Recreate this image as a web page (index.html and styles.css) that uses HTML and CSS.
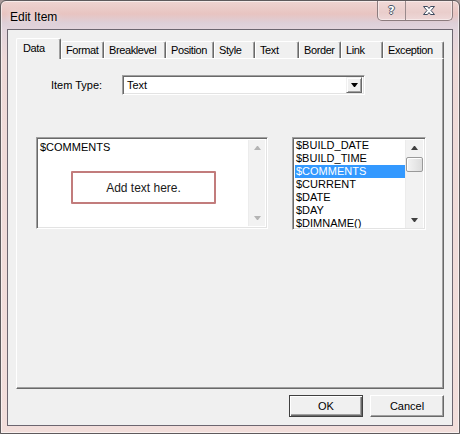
FILE: index.html
```html
<!DOCTYPE html>
<html lang="en">
  <head>
    <meta charset="UTF-8" />
    <title>Edit Item</title>
    <link rel="stylesheet" href="styles.css">
  </head>
  <body>
    <div class="window">
      <div class="titlebar">
        <span class="title">Edit Item</span>
        <div class="caption-buttons">
          <span class="caption-btn help">?</span>
          <span class="caption-btn close">
            <svg width="14" height="11" viewBox="0 0 14 11">
              <path d="M1.5 1.5h4l1.5 2 1.5-2h4l-3.5 4 3.5 4h-4l-1.5-2-1.5 2h-4l3.5-4z" fill="#fff" stroke="#3d4a5e" stroke-width="1" stroke-linejoin="round" />
            </svg>
          </span>
        </div>
      </div>

      <div class="client">
        <div class="tabs">
          <div class="tab active">Data</div>
          <div class="tab">Format</div>
          <div class="tab">Breaklevel</div>
          <div class="tab">Position</div>
          <div class="tab">Style</div>
          <div class="tab">Text</div>
          <div class="tab">Border</div>
          <div class="tab">Link</div>
          <div class="tab">Exception</div>
        </div>

        <div class="panel">
          <div class="field-row">
            <span class="field-label">Item Type:</span>
            <div class="combo">
              <span class="combo-value">Text</span>
              <span class="combo-button"><span class="arrow-down"></span></span>
            </div>
          </div>

          <div class="editors">
            <div class="text-editor sunken">
              <div class="text-editor-body">
                <div class="editor-line">$COMMENTS</div>
                <div class="placeholder-box">Add text here.</div>
              </div>
              <div class="scrollbar disabled">
                <span class="scroll-cell"><span class="arrow-up"></span></span>
                <span class="scroll-track"></span>
                <span class="scroll-cell"><span class="arrow-down small"></span></span>
              </div>
            </div>

            <div class="listbox sunken">
              <ul class="list-items">
                <li>$BUILD_DATE</li>
                <li>$BUILD_TIME</li>
                <li class="selected">$COMMENTS</li>
                <li>$CURRENT</li>
                <li>$DATE</li>
                <li>$DAY</li>
                <li>$DIMNAME()</li>
              </ul>
              <div class="scrollbar">
                <span class="scroll-cell"><span class="arrow-up"></span></span>
                <span class="scroll-track"><span class="scroll-thumb"></span></span>
                <span class="scroll-cell"><span class="arrow-down small"></span></span>
              </div>
            </div>
          </div>
        </div>

        <div class="dialog-buttons">
          <button class="btn default">OK</button>
          <button class="btn">Cancel</button>
        </div>
      </div>
    </div>
  </body>
</html>
```

FILE: styles.css
```css
body {
  margin: 0;
  padding: 0;
  background-color: #a89a9a;
  font-family: "Liberation Sans", Arial, sans-serif;
  font-size: 11px;
  color: #000;
}
.window {
  box-sizing: border-box;
  width: 460px;
  height: 434px;
  display: flex;
  flex-direction: column;
  padding: 0 6px 7px 6px;
  border: 1px solid #5e5a5c;
  border-radius: 6px 6px 0 0;
  box-shadow: inset 0 0 0 1px rgba(255, 255, 255, 0.55);
  background: linear-gradient(
    to bottom,
    #eed4d1 0,
    #e8c4c1 13px,
    #ddcfd8 22px,
    #e2d4dc 28px,
    #eed9d7 60px,
    #f2dedb 100%
  );
}
.titlebar {
  height: 28px;
  display: flex;
  align-items: flex-start;
}
.title {
  padding: 9px 0 0 3px;
  font-size: 12px;
  color: #000;
  text-shadow: 0 0 6px rgba(255, 255, 255, 0.9);
}
.caption-buttons {
  margin-left: auto;
  display: flex;
  height: 19px;
  border: 1px solid #8c7c7e;
  border-top: none;
  border-radius: 0 0 5px 5px;
  background: linear-gradient(to bottom, #f1d9d7, #e9cdcb 60%, #eed8d8);
  box-shadow: inset 0 0 0 1px rgba(255, 255, 255, 0.45);
}
.caption-btn {
  display: flex;
  align-items: center;
  justify-content: center;
}
.help {
  width: 27px;
  border-right: 1px solid #9a8a8c;
  font-family: "DejaVu Sans", sans-serif;
  font-weight: bold;
  font-size: 11px;
  color: #fff;
  text-shadow: 1px 0 #4a5668, -1px 0 #4a5668, 0 1px #4a5668, 0 -1px #4a5668;
}
.close {
  width: 46px;
}
.client {
  flex: 1;
  display: flex;
  flex-direction: column;
  padding: 8px;
  border: 1px solid #6c6670;
  background-color: #f0f0f0;
}
.tabs {
  height: 20px;
  display: grid;
  grid-template-columns: 45px 43px 62px 48px 41px 44px 42px 42px 61px;
  align-items: end;
}
.tab {
  box-sizing: border-box;
  height: 17px;
  padding: 2px 0 0 4px;
  line-height: 13px;
  letter-spacing: -0.4px;
  border-top: 1px solid #fff;
  border-left: 1px solid #fff;
  border-right: 1px solid #696969;
  border-radius: 2px 2px 0 0;
  box-shadow: inset -1px 0 #a0a0a0;
  background-color: #f0f0f0;
  white-space: nowrap;
  overflow: hidden;
}
.tab.active {
  position: relative;
  z-index: 1;
  height: 21px;
  margin-bottom: -1px;
  padding: 3px 0 0 6px;
}
.panel {
  box-sizing: border-box;
  height: 331px;
  border-top: 1px solid #fff;
  border-left: 1px solid #fff;
  border-right: 1px solid #696969;
  border-bottom: 1px solid #696969;
  box-shadow: inset -1px -1px #a0a0a0;
}
.field-row {
  display: flex;
  align-items: center;
  margin-top: 16px;
  padding-left: 34px;
}
.field-label {
  width: 71px;
}
.sunken {
  box-sizing: border-box;
  border-top: 1px solid #a0a0a0;
  border-left: 1px solid #a0a0a0;
  border-right: 1px solid #fff;
  border-bottom: 1px solid #fff;
  box-shadow: inset 1px 1px #696969, inset -1px -1px #e3e3e3;
  background-color: #fff;
}
.combo {
  box-sizing: border-box;
  width: 243px;
  height: 20px;
  display: flex;
  align-items: center;
  padding: 2px;
  border-top: 1px solid #a0a0a0;
  border-left: 1px solid #a0a0a0;
  border-right: 1px solid #fff;
  border-bottom: 1px solid #fff;
  box-shadow: inset 1px 1px #696969, inset -1px -1px #e3e3e3;
  background-color: #fff;
}
.combo-value {
  flex: 1;
  padding-left: 2px;
}
.combo-button {
  box-sizing: border-box;
  width: 16px;
  height: 16px;
  display: flex;
  align-items: center;
  justify-content: center;
  border-top: 1px solid #f0f0f0;
  border-left: 1px solid #f0f0f0;
  border-right: 1px solid #696969;
  border-bottom: 1px solid #696969;
  box-shadow: inset 1px 1px #fff, inset -1px -1px #a0a0a0;
  background-color: #f0f0f0;
}
.arrow-down {
  width: 1px;
  height: 0;
  border-left: 3px solid transparent;
  border-right: 3px solid transparent;
  border-top: 4px solid #000;
}
.arrow-up {
  width: 1px;
  height: 0;
  border-left: 3px solid transparent;
  border-right: 3px solid transparent;
  border-bottom: 4px solid #404040;
}
.arrow-down.small {
  border-top-color: #404040;
}
.editors {
  display: flex;
  gap: 24px;
  margin-top: 42px;
  padding-left: 19px;
}
.text-editor {
  width: 232px;
  height: 92px;
  display: flex;
  padding: 2px;
}
.text-editor-body {
  flex: 1;
  padding: 1px 0 0 1px;
}
.editor-line {
  line-height: 13px;
}
.placeholder-box {
  box-sizing: border-box;
  width: 145px;
  height: 33px;
  margin: 17px 0 0 31px;
  display: flex;
  align-items: center;
  justify-content: center;
  border: 2px solid #c27c7c;
  border-radius: 1px;
  font-size: 12px;
  color: #1a1a1a;
}
.scrollbar {
  width: 16px;
  display: flex;
  flex-direction: column;
  background-color: #f2f2f2;
  border-left: 1px solid #ececec;
}
.scroll-cell {
  height: 16px;
  display: flex;
  align-items: center;
  justify-content: center;
}
.scroll-track {
  flex: 1;
  display: flex;
  flex-direction: column;
}
.scrollbar.disabled .arrow-up {
  border-bottom-color: #b4b4b4;
}
.scrollbar.disabled .arrow-down {
  border-top-color: #b4b4b4;
}
.scroll-thumb {
  box-sizing: border-box;
  height: 15px;
  margin: 1px 0 0 0;
  border: 1px solid #9a9a9a;
  border-radius: 2px;
  background: linear-gradient(to right, #f4f4f4, #e6e6e6 60%, #dcdcdc);
  box-shadow: inset 1px 1px #fff;
}
.listbox {
  width: 134px;
  height: 93px;
  display: flex;
  padding: 2px 2px 1px 2px;
}
.listbox .scrollbar {
  width: 17px;
}
.list-items {
  flex: 1;
  margin: -1px 0 0 0;
  padding: 0;
  list-style: none;
  overflow: hidden;
}
.list-items li {
  height: 13px;
  line-height: 13px;
  padding-left: 2px;
  margin-left: -1px;
  white-space: nowrap;
}
.list-items li.selected {
  background-color: #3399ff;
  color: #fff;
}
.dialog-buttons {
  display: flex;
  justify-content: flex-end;
  gap: 7px;
  margin-top: 6px;
}
.btn {
  box-sizing: border-box;
  width: 74px;
  height: 22px;
  padding: 0;
  font-family: "Liberation Sans", Arial, sans-serif;
  font-size: 11px;
  color: #000;
  background-color: #f0f0f0;
  border-top: 1px solid #fff;
  border-left: 1px solid #fff;
  border-right: 1px solid #696969;
  border-bottom: 1px solid #696969;
  box-shadow: inset -1px -1px #a0a0a0;
}
.btn.default {
  border: 1px solid #404040;
  box-shadow: inset 1px 1px #fff, inset -1px -1px #696969, inset -2px -2px #a0a0a0;
}
```
